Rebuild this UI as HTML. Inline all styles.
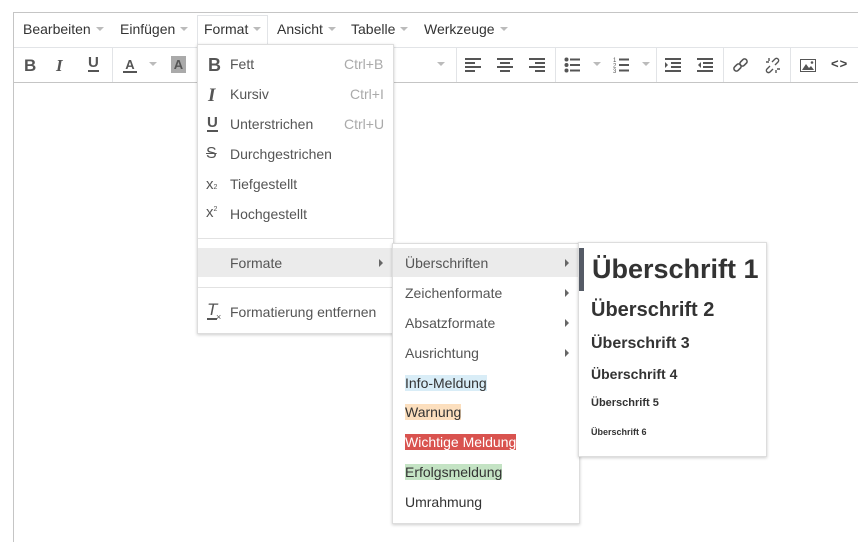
<!DOCTYPE html>
<html><head><meta charset="utf-8"><style>
*{margin:0;padding:0;box-sizing:border-box}
body{width:858px;height:542px;background:#fff;font-family:"Liberation Sans",Arial,sans-serif;position:relative;overflow:hidden;color:#333}
.a{position:absolute}
.mb{font-size:14px;color:#333;top:21px;white-space:nowrap}
.car{display:inline-block;width:0;height:0;border-left:4px solid transparent;border-right:4px solid transparent;border-top:4px solid #bbb;margin-left:5px;vertical-align:3px}
.sep{position:absolute;top:48px;width:1px;height:34px;background:#e2e4e7}
.menu{position:absolute;background:#fff;border:1px solid #ddd;box-shadow:0 1px 3px rgba(0,0,0,.2)}
.it{position:absolute;font-size:14px;color:#555;white-space:nowrap}
.sc{position:absolute;font-size:14px;color:#aaa;right:9px}
.tri{position:absolute;width:0;height:0;border-top:4px solid transparent;border-bottom:4px solid transparent;border-left:4px solid #666}
.ic{position:absolute;fill:#555;stroke:none}
</style></head><body>
<div class="a" style="left:13px;top:12px;width:845px;height:530px;border:1px solid #c5c5c5;border-right:none;border-bottom:none"></div>
<div class="a" style="left:14px;top:47px;width:844px;height:1px;background:#e2e4e7"></div>
<div class="a" style="left:14px;top:82px;width:844px;height:1px;background:#c5c5c5"></div>
<div class="a" style="left:197px;top:15px;width:71px;height:30px;border:1px solid #e2e4e7;border-bottom:none"></div>
<div class="a mb" style="left:23px">Bearbeiten<span class="car"></span></div>
<div class="a mb" style="left:120px">Einfügen<span class="car"></span></div>
<div class="a mb" style="left:204px">Format<span class="car"></span></div>
<div class="a mb" style="left:277px">Ansicht<span class="car"></span></div>
<div class="a mb" style="left:351px">Tabelle<span class="car"></span></div>
<div class="a mb" style="left:424px">Werkzeuge<span class="car"></span></div>

<!-- toolbar -->
<div class="a" style="left:24px;top:56px;font:bold 17px 'Liberation Sans';color:#555">B</div>
<div class="a" style="left:56px;top:56px;font:italic bold 17px 'Liberation Serif';color:#555">I</div>
<div class="a" style="left:88px;top:56px;font:bold 15px 'Liberation Sans';color:#555;border-bottom:2px solid #555;line-height:14px">U</div>
<div class="sep" style="left:112px"></div>
<div class="a" style="left:123px;top:58px;font:bold 13px 'Liberation Sans';color:#555;border-bottom:2px solid #555;line-height:13px;width:14px;text-align:center">A</div>
<div class="a car" style="left:144px;top:62px"></div>
<div class="a" style="left:171px;top:56px;width:15px;height:17px;background:#aaa;font:bold 13px 'Liberation Sans';color:#555;text-align:center;line-height:17px">A</div>
<div class="a car" style="left:432px;top:62px"></div>
<div class="sep" style="left:456px"></div>
<svg class="ic" style="left:465px;top:57px" width="16" height="16"><rect x="0" y="1" width="16" height="2"/><rect x="0" y="5" width="10" height="2"/><rect x="0" y="9" width="16" height="2"/><rect x="0" y="13" width="10" height="2"/></svg>
<svg class="ic" style="left:497px;top:57px" width="16" height="16"><rect x="0" y="1" width="16" height="2"/><rect x="3" y="5" width="10" height="2"/><rect x="0" y="9" width="16" height="2"/><rect x="3" y="13" width="10" height="2"/></svg>
<svg class="ic" style="left:529px;top:57px" width="16" height="16"><rect x="0" y="1" width="16" height="2"/><rect x="6" y="5" width="10" height="2"/><rect x="0" y="9" width="16" height="2"/><rect x="6" y="13" width="10" height="2"/></svg>
<div class="sep" style="left:555px"></div>
<svg class="ic" style="left:564px;top:57px" width="18" height="16"><circle cx="2.5" cy="2.5" r="2"/><circle cx="2.5" cy="8" r="2"/><circle cx="2.5" cy="13.5" r="2"/><rect x="6" y="1.5" width="10" height="2"/><rect x="6" y="7" width="10" height="2"/><rect x="6" y="12.5" width="10" height="2"/></svg>
<div class="a car" style="left:588px;top:62px"></div>
<svg class="ic" style="left:613px;top:57px" width="18" height="16"><text x="0" y="5" font-size="6" fill="#555">1</text><text x="0" y="10.5" font-size="6" fill="#555">2</text><text x="0" y="16" font-size="6" fill="#555">3</text><rect x="6" y="1.5" width="10" height="2"/><rect x="6" y="7" width="10" height="2"/><rect x="6" y="12.5" width="10" height="2"/></svg>
<div class="a car" style="left:637px;top:62px"></div>
<div class="sep" style="left:656px"></div>
<svg class="ic" style="left:665px;top:57px" width="16" height="16"><rect x="0" y="1" width="16" height="2"/><rect x="6" y="5" width="10" height="2"/><rect x="6" y="9" width="10" height="2"/><rect x="0" y="13" width="16" height="2"/><path d="M0 5l3 3-3 3z"/></svg>
<svg class="ic" style="left:697px;top:57px" width="16" height="16"><rect x="0" y="1" width="16" height="2"/><rect x="6" y="5" width="10" height="2"/><rect x="6" y="9" width="10" height="2"/><rect x="0" y="13" width="16" height="2"/><path d="M4 5l-3 3 3 3z"/></svg>
<div class="sep" style="left:723px"></div>
<svg style="position:absolute;left:732px;top:57px" width="17" height="17" fill="none" stroke="#555" stroke-width="1.6"><rect x="1.5" y="8" width="8" height="5" rx="2.5" transform="rotate(-45 5.5 10.5)"/><rect x="7.5" y="3" width="8" height="5" rx="2.5" transform="rotate(-45 11.5 5.5)"/></svg>
<svg style="position:absolute;left:764px;top:57px" width="17" height="17" fill="none" stroke="#555" stroke-width="1.4"><path d="M6 9l-3 3a2 2 0 0 0 3 3l3-3M11 8l3-3a2 2 0 0 0-3-3l-3 3M2 5h3M5 1v3M12 16v-3M16 12h-3"/></svg>
<div class="sep" style="left:790px"></div>
<svg style="position:absolute;left:800px;top:58px" width="16" height="15"><rect x="0.5" y="1.5" width="15" height="12" fill="none" stroke="#555"/><path d="M2 12l4-6 3 4 2-2 3 4z" fill="#555"/><circle cx="12" cy="4.5" r="1.3" fill="#555"/></svg>
<div class="a" style="left:831px;top:56px;font:13px 'Liberation Sans';color:#444;font-weight:bold;letter-spacing:1px">&lt;&gt;</div>

<!-- format menu -->
<div class="menu" style="left:197px;top:44px;width:197px;height:290px"></div>
<div class="a" style="left:208px;top:55px;font:bold 18px 'Liberation Sans';color:#555">B</div>
<div class="it" style="left:230px;top:56px">Fett</div><div class="sc" style="left:344px;top:56px">Ctrl+B</div>
<div class="a" style="left:208px;top:85px;font:italic bold 19px 'Liberation Serif';color:#555">I</div>
<div class="it" style="left:230px;top:86px">Kursiv</div><div class="sc" style="left:350px;top:86px">Ctrl+I</div>
<div class="a" style="left:207px;top:116px;font:bold 15px 'Liberation Sans';color:#555;border-bottom:2px solid #555;line-height:14px">U</div>
<div class="it" style="left:230px;top:116px">Unterstrichen</div><div class="sc" style="left:344px;top:116px">Ctrl+U</div>
<div class="a" style="left:206px;top:145px;font:16px 'Liberation Sans';color:#555;text-decoration:line-through">S</div>
<div class="it" style="left:230px;top:146px">Durchgestrichen</div>
<div class="a" style="left:206px;top:176px;font:15px 'Liberation Sans';color:#555">x<span style="font-size:7px">2</span></div>
<div class="it" style="left:230px;top:176px">Tiefgestellt</div>
<div class="a" style="left:206px;top:204px;font:15px 'Liberation Sans';color:#555">x<sup style="font-size:7px">2</sup></div>
<div class="it" style="left:230px;top:206px">Hochgestellt</div>
<div class="a" style="left:198px;top:238px;width:195px;height:1px;background:#e2e2e2"></div>
<div class="a" style="left:198px;top:248px;width:195px;height:29px;background:#ebebeb"></div>
<div class="it" style="left:230px;top:255px">Formate</div>
<div class="tri" style="left:379px;top:259px"></div>
<div class="a" style="left:198px;top:287px;width:195px;height:1px;background:#e2e2e2"></div>
<div class="a" style="left:207px;top:302px;font:italic 17px 'Liberation Sans';color:#555;border-bottom:2px solid #555;line-height:16px;width:10px">T</div>
<div class="a" style="left:216px;top:312px;font:9px 'Liberation Sans';color:#555">×</div>
<div class="it" style="left:230px;top:304px">Formatierung entfernen</div>

<!-- submenu 2 -->
<div class="menu" style="left:392px;top:243px;width:188px;height:281px"></div>
<div class="a" style="left:393px;top:248px;width:186px;height:29px;background:#ebebeb"></div>
<div class="it" style="left:405px;top:255px">Überschriften</div><div class="tri" style="left:565px;top:259px"></div>
<div class="it" style="left:405px;top:285px">Zeichenformate</div><div class="tri" style="left:565px;top:289px"></div>
<div class="it" style="left:405px;top:315px">Absatzformate</div><div class="tri" style="left:565px;top:319px"></div>
<div class="it" style="left:405px;top:345px">Ausrichtung</div><div class="tri" style="left:565px;top:349px"></div>
<div class="it" style="left:405px;top:375px;background:#d9edf7;color:#333">Info-Meldung</div>
<div class="it" style="left:405px;top:404px;background:#fcdfbe;color:#333">Warnung</div>
<div class="it" style="left:405px;top:434px;background:#d9534f;color:#fff">Wichtige Meldung</div>
<div class="it" style="left:405px;top:464px;background:#c4e3c4;color:#333">Erfolgsmeldung</div>
<div class="it" style="left:405px;top:494px;color:#333">Umrahmung</div>

<!-- submenu 3 -->
<div class="menu" style="left:578px;top:242px;width:189px;height:215px"></div>
<div class="a" style="left:579px;top:248px;width:5px;height:43px;background:#555b66"></div>
<div class="a" style="left:592px;top:254px;font:bold 27px 'Liberation Sans';color:#333">Überschrift 1</div>
<div class="a" style="left:591px;top:299px;font:bold 20px 'Liberation Sans';color:#333">Überschrift 2</div>
<div class="a" style="left:591px;top:335px;font:bold 16px 'Liberation Sans';color:#333">Überschrift 3</div>
<div class="a" style="left:591px;top:366px;font:bold 14px 'Liberation Sans';color:#333">Überschrift 4</div>
<div class="a" style="left:591px;top:397px;font:bold 11px 'Liberation Sans';color:#333">Überschrift 5</div>
<div class="a" style="left:591px;top:427px;font:bold 9px 'Liberation Sans';color:#333">Überschrift 6</div>
</body></html>
